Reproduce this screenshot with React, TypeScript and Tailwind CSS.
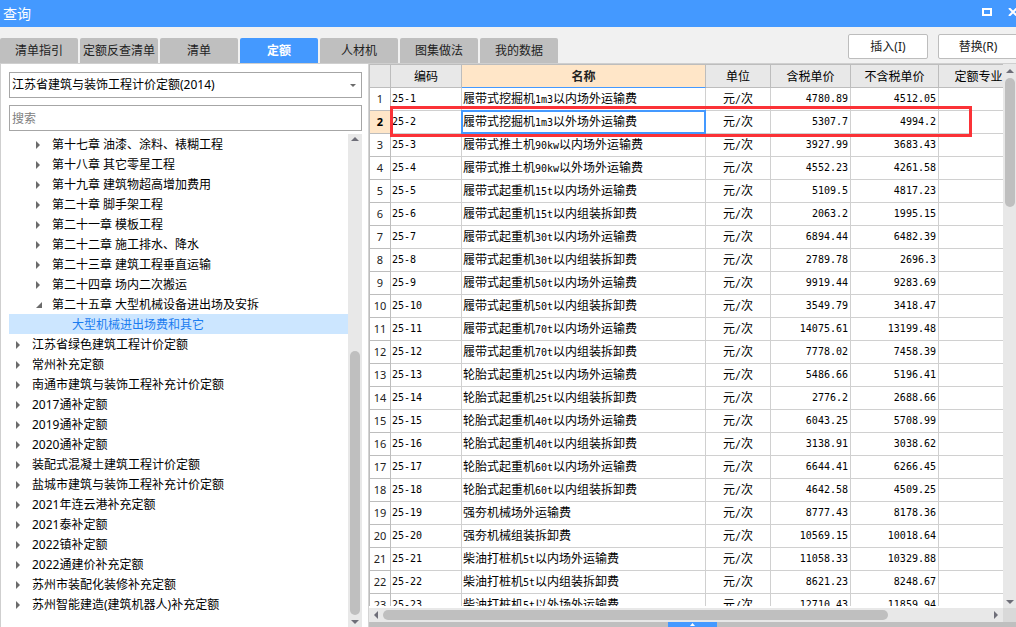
import React from "react";

type TreeNode = { label: string; level: 0 | 1 | 2; state?: "open" | "leaf" };
type Row = { name: string; taxed: string; untaxed: string };

const tabs = ["清单指引", "定额反查清单", "清单", "定额", "人材机", "图集做法", "我的数据"];
const activeTab = "定额";

const tree: TreeNode[] = [
  { label: "第十七章 油漆、涂料、裱糊工程", level: 1 },
  { label: "第十八章 其它零星工程", level: 1 },
  { label: "第十九章 建筑物超高增加费用", level: 1 },
  { label: "第二十章 脚手架工程", level: 1 },
  { label: "第二十一章 模板工程", level: 1 },
  { label: "第二十二章 施工排水、降水", level: 1 },
  { label: "第二十三章 建筑工程垂直运输", level: 1 },
  { label: "第二十四章 场内二次搬运", level: 1 },
  { label: "第二十五章 大型机械设备进出场及安拆", level: 1, state: "open" },
  { label: "大型机械进出场费和其它", level: 2, state: "leaf" },
  { label: "江苏省绿色建筑工程计价定额", level: 0 },
  { label: "常州补充定额", level: 0 },
  { label: "南通市建筑与装饰工程补充计价定额", level: 0 },
  { label: "2017通补定额", level: 0 },
  { label: "2019通补定额", level: 0 },
  { label: "2020通补定额", level: 0 },
  { label: "装配式混凝土建筑工程计价定额", level: 0 },
  { label: "盐城市建筑与装饰工程补充计价定额", level: 0 },
  { label: "2021年连云港补充定额", level: 0 },
  { label: "2021泰补定额", level: 0 },
  { label: "2022镇补定额", level: 0 },
  { label: "2022通建价补充定额", level: 0 },
  { label: "苏州市装配化装修补充定额", level: 0 },
  { label: "苏州智能建造(建筑机器人)补充定额", level: 0 },
];

const rows: Row[] = [
  { name: "履带式挖掘机1m3以内场外运输费", taxed: "4780.89", untaxed: "4512.05" },
  { name: "履带式挖掘机1m3以外场外运输费", taxed: "5307.7", untaxed: "4994.2" },
  { name: "履带式推土机90kw以内场外运输费", taxed: "3927.99", untaxed: "3683.43" },
  { name: "履带式推土机90kw以外场外运输费", taxed: "4552.23", untaxed: "4261.58" },
  { name: "履带式起重机15t以内场外运输费", taxed: "5109.5", untaxed: "4817.23" },
  { name: "履带式起重机15t以内组装拆卸费", taxed: "2063.2", untaxed: "1995.15" },
  { name: "履带式起重机30t以内场外运输费", taxed: "6894.44", untaxed: "6482.39" },
  { name: "履带式起重机30t以内组装拆卸费", taxed: "2789.78", untaxed: "2696.3" },
  { name: "履带式起重机50t以内场外运输费", taxed: "9919.44", untaxed: "9283.69" },
  { name: "履带式起重机50t以内组装拆卸费", taxed: "3549.79", untaxed: "3418.47" },
  { name: "履带式起重机70t以内场外运输费", taxed: "14075.61", untaxed: "13199.48" },
  { name: "履带式起重机70t以内组装拆卸费", taxed: "7778.02", untaxed: "7458.39" },
  { name: "轮胎式起重机25t以内场外运输费", taxed: "5486.66", untaxed: "5196.41" },
  { name: "轮胎式起重机25t以内组装拆卸费", taxed: "2776.2", untaxed: "2688.66" },
  { name: "轮胎式起重机40t以内场外运输费", taxed: "6043.25", untaxed: "5708.99" },
  { name: "轮胎式起重机40t以内组装拆卸费", taxed: "3138.91", untaxed: "3038.62" },
  { name: "轮胎式起重机60t以内场外运输费", taxed: "6644.41", untaxed: "6266.45" },
  { name: "轮胎式起重机60t以内组装拆卸费", taxed: "4642.58", untaxed: "4509.25" },
  { name: "强夯机械场外运输费", taxed: "8777.43", untaxed: "8178.36" },
  { name: "强夯机械组装拆卸费", taxed: "10569.15", untaxed: "10018.64" },
  { name: "柴油打桩机5t以内场外运输费", taxed: "11058.33", untaxed: "10329.88" },
  { name: "柴油打桩机5t以内组装拆卸费", taxed: "8621.23", untaxed: "8248.67" },
  { name: "柴油打桩机5t以外场外运输费", taxed: "12710.43", untaxed: "11859.94" },
];

const selectedRow = 1;
const indent = { 0: "pl-[7px]", 1: "pl-[27px]", 2: "pl-[47px]" };

/* Sets Latin runs in a monospace face half as wide as the Chinese characters. */
function GridText({ children }: { children: string }) {
  return (
    <>
      {children.split(/([\x21-\x7e]+)/).map((part, i) =>
        i % 2 ? (
          <span key={i} className="font-['DejaVu_Sans_Mono',monospace] text-[10px]">{part}</span>
        ) : (
          part
        ),
      )}
    </>
  );
}

function Arrow({ dir, className = "text-[#6e6e78]" }: { dir: "up" | "down" | "left" | "right"; className?: string }) {
  const shape = {
    up: "0,4 4,0 8,4",
    down: "0,0 8,0 4,4",
    left: "4,0 4,8 0,4",
    right: "0,0 4,4 0,8",
  }[dir];
  const vertical = dir === "up" || dir === "down";
  return (
    <svg width={vertical ? 8 : 4} height={vertical ? 4 : 8} className={`shrink-0 ${className}`} fill="currentColor" aria-hidden="true">
      <polygon points={shape} />
    </svg>
  );
}

function TreeItem({ node }: { node: TreeNode }) {
  const selected = node.state === "leaf";
  return (
    <li>
      <button
        type="button"
        className={`flex h-5 w-full items-center whitespace-nowrap pt-0.5 text-left ${indent[node.level]} ${selected ? "bg-[#cce6ff] text-[#1a7cf0]" : ""}`}
      >
        <span className="flex w-4 shrink-0 text-[#6b6b6b]">
          {node.state === "open" ? (
            <svg width="6" height="6" fill="currentColor" aria-hidden="true">
              <polygon points="6,0 6,6 0,6" />
            </svg>
          ) : node.state === "leaf" ? null : (
            <Arrow dir="right" className="text-[#6b6b6b]" />
          )}
        </span>
        {node.label}
      </button>
    </li>
  );
}

const head = "border-r border-b border-[#bdbdbd] p-0 pt-0.5 font-normal";
const cell = "border-r border-b border-[#d0d0d0] p-0";

function QuotaTable() {
  return (
    <table className="w-full min-w-[649px] table-fixed border-separate border-spacing-0 whitespace-nowrap text-black">
      <colgroup>
        <col className="w-[21px]" />
        <col className="w-[71px]" />
        <col />
        <col className="w-[65px]" />
        <col className="w-[80px]" />
        <col className="w-[88px]" />
        <col className="w-[80px]" />
      </colgroup>
      <thead>
        <tr className="h-[23px] bg-[#e8e8e8]">
          <th className={head} aria-label="序号" />
          <th className={head}>编码</th>
          <th className="border-r border-b border-r-[#bdbdbd] border-b-[#4499ff] bg-[#ffe6c8] p-0 pt-0.5 font-bold text-[#222]">名称</th>
          <th className={head}>单位</th>
          <th className={head}>含税单价</th>
          <th className={head}>不含税单价</th>
          <th className={head}>定额专业</th>
        </tr>
      </thead>
      <tbody>
        {rows.map((row, i) => {
          const selected = i === selectedRow;
          return (
            <tr key={i} className="h-[23px]">
              <th
                scope="row"
                className={`border-r border-b border-b-[#bdbdbd] p-0 text-[11px] ${selected ? "border-r-[#4499ff] bg-[#ffe6c8] font-bold text-black" : "border-r-[#bdbdbd] font-normal text-[#222]"}`}
              >
                {i + 1}
              </th>
              <td className={`${cell} pb-0.5 pl-px`}><GridText>{`25-${i + 1}`}</GridText></td>
              <td className={`${cell} pl-px ${selected ? "relative after:absolute after:-inset-px after:border-2 after:border-[#4499ff]" : ""}`}>
                <GridText>{row.name}</GridText>
              </td>
              <td className={`${cell} text-center`}><GridText>元/次</GridText></td>
              <td className={`${cell} pr-0.5 pb-0.5 text-right`}><GridText>{row.taxed}</GridText></td>
              <td className={`${cell} pr-0.5 pb-0.5 text-right`}><GridText>{row.untaxed}</GridText></td>
              <td className={cell} />
            </tr>
          );
        })}
      </tbody>
    </table>
  );
}

export default function App() {
  return (
    <div className="flex h-screen flex-col overflow-hidden bg-[#f1f1f1] font-['Noto_Sans','Noto_Sans_CJK_SC',sans-serif] text-xs leading-4 text-black">
      <header className="flex h-[27px] shrink-0 items-center justify-between bg-[#4499ff] pl-[3px] text-white">
        <h1 className="text-sm leading-5">查询</h1>
        <div className="-mr-0.5 flex gap-4 pb-1">
          <button type="button" aria-label="最大化">
            <svg width="10" height="8" fill="none" stroke="currentColor" strokeWidth="2" aria-hidden="true">
              <rect x="1" y="1" width="8" height="6" />
            </svg>
          </button>
          <button type="button" aria-label="关闭">
            <svg width="10" height="8" fill="none" stroke="currentColor" strokeWidth="2" aria-hidden="true">
              <path d="M1 0l8 8M9 0L1 8" />
            </svg>
          </button>
        </div>
      </header>

      <div className="flex h-9 shrink-0 items-end justify-between">
        <nav className="flex gap-0.5">
          {tabs.map((tab) => (
            <button
              key={tab}
              type="button"
              className={`h-[25px] w-[78px] shrink-0 whitespace-nowrap rounded-t-xs ${tab === activeTab ? "bg-[#4499ff] font-bold text-white" : "bg-[#bfbfbf] text-[#222]"}`}
            >
              {tab}
            </button>
          ))}
        </nav>
        <div className="-mr-0.5 flex shrink-0 gap-2.5 pb-1">
          {["插入(I)", "替换(R)"].map((label) => (
            <button key={label} type="button" className="h-[25px] w-20 rounded-xs border border-[#bdbdbd] bg-white text-[#222]">
              {label}
            </button>
          ))}
        </div>
      </div>

      <main className="flex min-h-0 flex-1 border-t border-l border-[#cfcfcf] bg-white">
        <aside className="flex w-[367px] shrink-0 flex-col pt-2 pr-1.5 pl-2">
          <div className="grid shrink-0 items-center">
            <select aria-label="定额库" className="col-start-1 row-start-1 h-[26px] w-full appearance-none border border-[#a6a6a6] bg-white pl-0.5 text-xs">
              <option>江苏省建筑与装饰工程计价定额(2014)</option>
            </select>
            <svg width="6" height="3" className="pointer-events-none col-start-1 row-start-1 mr-1.5 justify-self-end text-[#6b6b6b]" fill="currentColor" aria-hidden="true">
              <polygon points="0,0 6,0 3,3" />
            </svg>
          </div>
          <input
            type="text"
            aria-label="搜索"
            placeholder="搜索"
            className="mt-[7px] h-[26px] w-full shrink-0 border border-[#a6a6a6] bg-white pl-0.5 placeholder:text-[#808080]"
          />
          <div className="mt-[3px] flex min-h-0 flex-1">
            <ul className="min-w-0 flex-1 overflow-hidden">
              {tree.map((node) => (
                <TreeItem key={node.label} node={node} />
              ))}
            </ul>
            <div className="flex w-3.5 shrink-0 flex-col items-center justify-between bg-[#e8e8e8] pt-[3px] pb-[3px]">
              <Arrow dir="up" />
              <div className="mt-auto mb-[5px] h-[264px] w-2.5 rounded-full bg-[#bfbfbf]" />
              <Arrow dir="down" />
            </div>
          </div>
        </aside>

        <section className="flex min-w-0 flex-1 flex-col border-l border-[#d4d4d4]">
          <div className="flex min-h-0 flex-1 pb-0.5">
            <div className="relative min-w-0 flex-1 overflow-hidden border-t border-l border-[#bdbdbd]">
              <QuotaTable />
              <div className="pointer-events-none absolute top-[41px] right-[31px] left-5 h-[31px] border-3 border-[#fb3237]" />
            </div>
            <div className="-mb-0.5 flex w-[13px] shrink-0 flex-col items-center bg-[#e8e8e8] pt-[5px] pb-1">
              <Arrow dir="up" />
              <div className="mt-[5px] mb-auto h-[129px] w-2.5 rounded-full bg-[#bfbfbf]" />
              <Arrow dir="down" />
            </div>
          </div>
          <div className="flex h-3.5 shrink-0 bg-[#e8e8e8]">
            <div className="flex flex-1 items-center justify-between pr-[5px] pl-[5px]">
              <Arrow dir="left" />
              <div className="mr-auto ml-[5px] h-2.5 w-[505px] rounded-full bg-[#bfbfbf]" />
              <Arrow dir="right" />
            </div>
            <div className="w-[13px] bg-[#d9d9d9]" />
          </div>
          <div className="flex h-[5px] shrink-0 justify-center bg-[#bfbfbf]">
            <button type="button" aria-label="展开" className="flex w-[49px] items-center justify-center bg-[#4499ff] text-white">
              <svg width="5" height="3" fill="currentColor" aria-hidden="true">
                <polygon points="0,3 2.5,0 5,3" />
              </svg>
            </button>
          </div>
        </section>
      </main>
    </div>
  );
}
